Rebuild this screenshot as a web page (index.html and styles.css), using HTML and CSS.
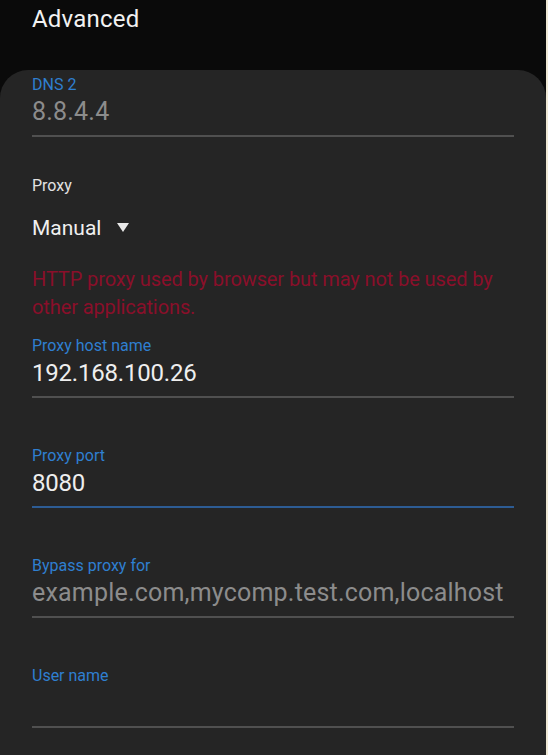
FILE: index.html
```html
<!DOCTYPE html>
<html>
<head>
<meta charset="utf-8">
<link rel="stylesheet" href="styles.css">
</head>
<body>
<div class="screen">
  <header class="topbar">
    <h1 class="title">Advanced</h1>
  </header>
  <main class="card">
    <div class="field">
      <div class="label">DNS 2</div>
      <div class="value dim">8.8.4.4</div>
    </div>
    <div class="proxy">
      <div class="plabel">Proxy</div>
      <div class="select">Manual <span class="tri"></span></div>
      <p class="warn">HTTP proxy used by browser but may not be used by other applications.</p>
    </div>
    <div class="field">
      <div class="label">Proxy host name</div>
      <div class="value">192.168.100.26</div>
    </div>
    <div class="field focused">
      <div class="label">Proxy port</div>
      <div class="value">8080</div>
    </div>
    <div class="field">
      <div class="label">Bypass proxy for</div>
      <div class="value dim">example.com,mycomp.test.com,localhost</div>
    </div>
    <div class="field">
      <div class="label">User name</div>
      <div class="value"></div>
    </div>
  </main>
</div>
</body>
</html>
```
FILE: styles.css
```css
html, body {
  margin: 0;
  padding: 0;
  background: #efe9d6;
  height: 755px;
  overflow: hidden;
}
.screen {
  width: 546px;
  height: 755px;
  background: #0a0a0a;
  font-family: Roboto, "Noto Sans", sans-serif;
  display: flex;
  flex-direction: column;
  overflow: hidden;
}
.topbar {
  flex: 0 0 70px;
  height: 70px;
  padding: 4px 32px 0;
  box-sizing: border-box;
}
.title {
  margin: 0;
  font-size: 24px;
  font-weight: 400;
  letter-spacing: 0.2px;
  color: #f2f2f2;
  line-height: 30px;
}
.card {
  flex: 1 0 auto;
  background: #252525;
  border-radius: 28px 28px 0 0;
  padding: 7px 32px 0;
  display: flex;
  flex-direction: column;
}
.field {
  flex-shrink: 0;
  border-bottom: 2px solid #505050;
  padding-bottom: 8px;
  margin-bottom: 50px;
  display: flex;
  flex-direction: column;
  gap: 4px;
}
.field.focused { border-bottom-color: #2d5c94; }
.label {
  font-size: 16px;
  line-height: 16px;
  color: #2f7fd0;
}
.value {
  font-size: 24px;
  line-height: 30px;
  height: 30px;
  letter-spacing: -0.2px;
  color: #eeeeee;
}
.value.dim {
  font-size: 25px;
  letter-spacing: 0.2px;
  color: #8c8c8c;
}
.proxy {
  flex-shrink: 0;
  margin-top: -11.5px;
  display: flex;
  flex-direction: column;
}
.plabel {
  font-size: 16px;
  line-height: 20px;
  color: #e2e2e2;
}
.select {
  margin-top: 19px;
  font-size: 21px;
  line-height: 26px;
  color: #f0f0f0;
  display: flex;
  align-items: center;
  gap: 16px;
}
.tri {
  width: 0;
  height: 0;
  border-left: 6.5px solid transparent;
  border-right: 6.5px solid transparent;
  border-top: 9px solid #e8e8e8;
}
.warn {
  margin: 24px 0 17px;
  font-size: 20px;
  line-height: 28px;
  letter-spacing: -0.1px;
  color: #8a0f2a;
}
```
